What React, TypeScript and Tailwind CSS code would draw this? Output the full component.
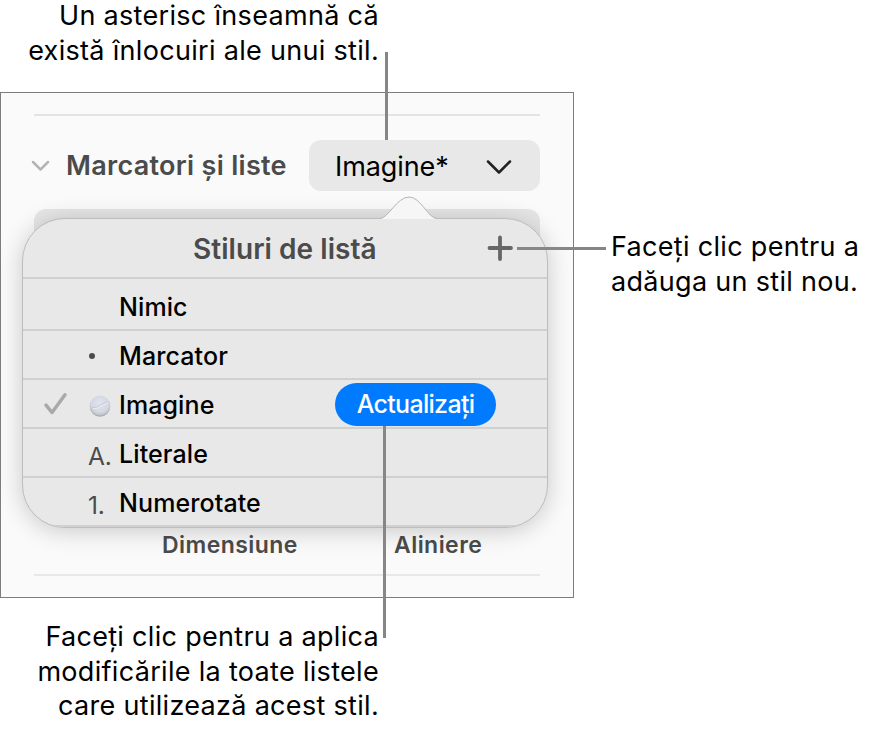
import clsx from 'clsx'

type ListStyle = {
  name: string
  marker: 'none' | 'dot' | 'image' | 'A.' | '1.'
  selected?: boolean
}

const listStyles: ListStyle[] = [
  { name: 'Nimic', marker: 'none' },
  { name: 'Marcator', marker: 'dot' },
  { name: 'Imagine', marker: 'image', selected: true },
  { name: 'Literale', marker: 'A.' },
  { name: 'Numerotate', marker: '1.' },
]

function Caption({ lines, className }: { lines: string[]; className?: string }) {
  return (
    <p className={clsx('text-[27px] leading-[34.5px] tracking-[0.31px] whitespace-nowrap text-black', className)}>
      {lines.map((line) => (
        <span key={line} className="block">
          {line}
        </span>
      ))}
    </p>
  )
}

function ImageBullet() {
  return (
    <svg className="mt-[5px] ml-px" width="22" height="24" viewBox="0 0 22 24">
      <defs>
        <radialGradient id="bullet" cx="0.5" cy="0.4" r="0.6">
          <stop offset="0" stopColor="#e0e5ef" />
          <stop offset="0.7" stopColor="#d3d8e2" />
          <stop offset="1" stopColor="#b9bcc2" />
        </radialGradient>
      </defs>
      <circle cx="11" cy="12.6" r="10.2" fill="#a9aaad" />
      <circle cx="11" cy="11.6" r="10.2" fill="url(#bullet)" />
      <path d="M3 13.500c5 .5 6-1.500 9-3 2.500-1.200 4.500-1.500 7-3.500" fill="none" stroke="#c5cbd6" strokeWidth="1" />
      <path d="M4 14.500c5 .5 6-1.500 9-3 2-1 4-1.500 6-3" fill="none" stroke="#e9edf4" strokeWidth="1" />
    </svg>
  )
}

function Marker({ marker }: { marker: ListStyle['marker'] }) {
  if (marker === 'none') return null
  if (marker === 'dot') return <span className="mt-0.5 ml-px block size-1.5 rounded-full bg-[#4b4b4b]" />
  if (marker === 'image') return <ImageBullet />
  return <span className="pt-[7px] text-[24.500px] tracking-[-0.2px] text-[#4b4b4b]">{marker}</span>
}

function StyleRow({ style }: { style: ListStyle }) {
  return (
    <li className="flex h-[49px] items-center border-b-2 border-[#d0d0d0] pl-5 first:h-[52px] first:pt-[3px]">
      <span className="w-[45px]">
        {style.selected && (
          <svg width="25" height="24" viewBox="0 0 25 24" fill="none" stroke="#a9a9a9" strokeWidth="3.500" strokeLinecap="round" strokeLinejoin="round">
            <path d="M3 13.200 9 20.500 22 2.800" />
          </svg>
        )}
      </span>
      <span className="flex w-[31px] items-center">
        <Marker marker={style.marker} />
      </span>
      <span className="pt-[4px] text-[25px] font-medium tracking-[0.1px] text-black">{style.name}</span>
      {style.selected && (
        <button className="mt-0.5 mr-[51px] ml-auto h-[43px] w-[161px] rounded-full bg-[#007aff] pt-px text-[25px] font-medium tracking-[-0.7px] text-white">
          Actualizați
        </button>
      )}
    </li>
  )
}

function Popover() {
  return (
    <div className="absolute top-[125px] left-[21px] w-[526px]">
      <div className="h-[310px] overflow-hidden rounded-[43px] border border-[#bdbdbd] bg-[#e8e8e8] shadow-[0_3px_24px_rgba(0,0,0,0.2)]">
        <div className="flex h-[60px] items-center border-b-2 border-[#d0d0d0] pl-[170px]">
          <h2 className="pt-0.5 text-[28px] font-semibold tracking-[0.05px] text-[#4b4b4b]">Stiluri de listă</h2>
          <svg className="mr-[34px] ml-auto" width="26" height="26" viewBox="0 0 26 26" fill="none" stroke="#666" strokeWidth="3.800" strokeLinecap="round">
            <path d="M13 2.500v21.500M2.500 13h21.500" />
          </svg>
        </div>
        <ul>
          {listStyles.map((style) => (
            <StyleRow key={style.name} style={style} />
          ))}
        </ul>
      </div>
      {/* Arrow towards the style menu */}
      <svg className="absolute -top-[22px] left-[356px]" width="60" height="24" viewBox="0 0 60 24">
        <path d="M2 22.500C10 22.500 19 1 31 1S50 22.500 59 22.500V23H2z" fill="#f6f6f6" />
        <path d="M2 22.500C10 22.500 19 1 31 1S50 22.500 59 22.500" fill="none" stroke="#b5b5b5" />
      </svg>
    </div>
  )
}

function FormatPanel() {
  return (
    <section className="relative h-[506px] w-[574px] shrink-0 border border-[#7d7d7d] bg-[#fafafa] px-[33px] pt-[21px]">
      <div className="h-0.5 bg-[#e4e4e4]" />
      <div className="mt-6 flex h-[51px] items-center">
        <svg className="-ml-[3px]" width="19" height="12" viewBox="0 0 19 12" fill="none" stroke="#b4b4b4" strokeWidth="2.500" strokeLinecap="round" strokeLinejoin="round">
          <path d="M2 2l7.500 7.500L17 2" />
        </svg>
        <h1 className="ml-4 pt-0.5 text-[27px] font-semibold tracking-[0.3px] whitespace-nowrap text-[#4b4b4b]">
          Marcatori și liste
        </h1>
        <button className="ml-auto flex h-[51px] w-[231px] shrink-0 items-center justify-between rounded-xl bg-[#e8e8e8] pr-[28px] pl-[26px] text-black">
          <span className="pt-[3px] text-[27px] tracking-[-0.1px]">Imagine*</span>
          <svg className="mt-0.5" width="26" height="16" viewBox="0 0 26 16" fill="none" stroke="#222" strokeWidth="2.500" strokeLinecap="round" strokeLinejoin="round">
            <path d="M2 2.500l11 11L24 2.500" />
          </svg>
        </button>
      </div>
      <div className="mt-[18px] h-[51px] rounded-xl bg-[#e6e6e6]" />
      <div className="mt-[271px] flex h-7 items-center pt-px text-[23px] font-semibold tracking-[0.45px] text-[#4b4b4b]">
        <span className="ml-[128px] w-[232px]">Dimensiune</span>
        <span>Aliniere</span>
      </div>
      <div className="mt-[15px] h-0.5 bg-[#e8e8e8]" />
      <Popover />
    </section>
  )
}

export default function App() {
  return (
    <main className="relative h-[734px] w-[875px] overflow-hidden bg-white font-['Inter',sans-serif]">
      <div className="flex h-[92px] w-[379px] justify-end text-right">
        <Caption className="-mt-px" lines={['Un asterisc înseamnă că', 'există înlocuiri ale unui stil.']} />
      </div>
      <div className="flex h-[506px]">
        <FormatPanel />
        <Caption className="mt-[138px] ml-[37px]" lines={['Faceți clic pentru a', 'adăuga un stil nou.']} />
      </div>
      <div className="mt-[22px] flex w-[379px] justify-end text-right">
        <Caption lines={['Faceți clic pentru a aplica', 'modificările la toate listele', 'care utilizează acest stil.']} />
      </div>

      {/* Callout lines */}
      <span className="absolute top-[52px] left-[385px] h-[88px] w-[2.500px] bg-[#868686]" />
      <span className="absolute top-[247px] left-[517px] h-[2.500px] w-[89px] bg-[#868686]" />
      <span className="absolute top-[426px] left-[383px] h-[212px] w-[2.500px] bg-[#868686]" />
    </main>
  )
}
